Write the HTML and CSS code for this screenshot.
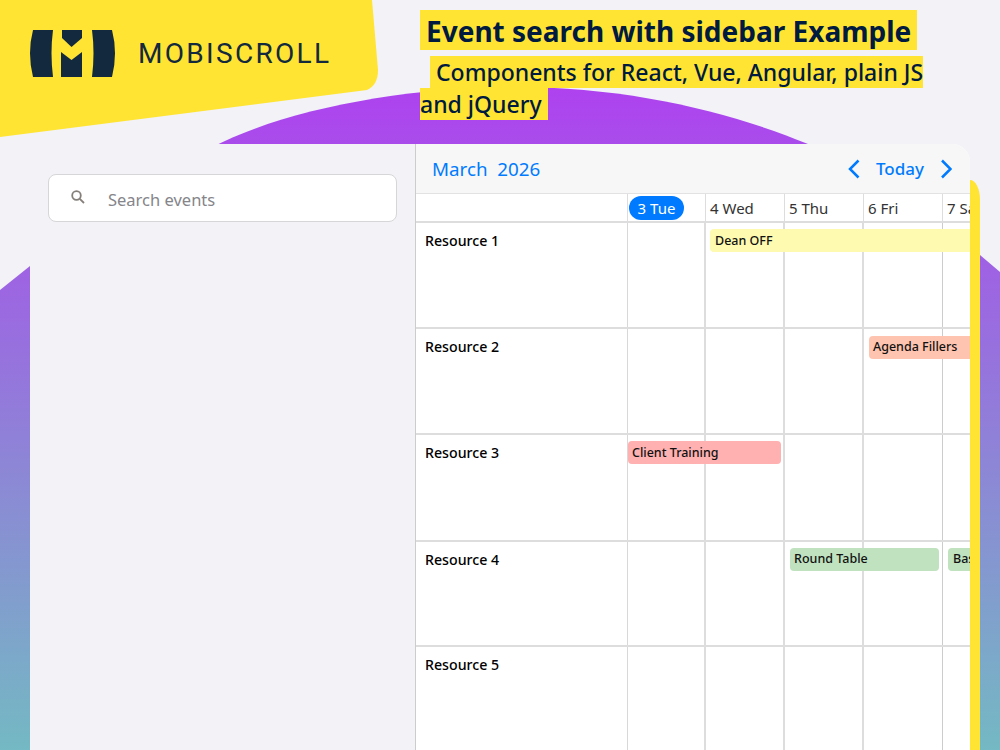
FILE: index.html
```html
<!DOCTYPE html>
<html lang="en">
<head>
<meta charset="utf-8">
<title>Event search with sidebar Example</title>
<link rel="stylesheet" href="styles.css">
</head>
<body>
<svg class="backdrop" width="1000" height="750" viewBox="0 0 1000 750" aria-hidden="true">
  <defs>
    <linearGradient id="wave" x1="0" y1="88" x2="0" y2="750" gradientUnits="userSpaceOnUse">
      <stop offset="0" stop-color="#ae42ef"/>
      <stop offset="1" stop-color="#74b9c3"/>
    </linearGradient>
  </defs>
  <path fill="url(#wave)" d="M0 290 L30 266 L200 154 C270 112 400 87 515 87 C630 87 730 112 808 144 L980 255 L1000 272 V750 H0 Z"/>
  <path fill="#ffe433" d="M0 0 H372 L378 70 Q378 85 367 90 L0 137 Z"/>
</svg>
<div class="page">
  <header class="top">
    <div class="brand">
      <svg class="mark" width="86" height="48" viewBox="30 30 86 48" aria-hidden="true">
        <path d="M33 30 H53 Q50 53 53 77 H33 Q27 53 33 30 Z"/>
        <path d="M92 30 H112 Q118 53 112 77 H92 Q95 53 92 30 Z"/>
        <path d="M62 30 H82 V38 L71.500 47 L62 38 Z"/>
        <path d="M61 52 L71.500 60 L82 52 V77 H61 Z"/>
      </svg>
      <span class="wordmark">MOBISCROLL</span>
    </div>
    <div class="titles">
      <h1 class="title"><span class="mark-bg title-text">Event search with sidebar Example</span></h1>
      <p class="subtitle"><span class="mark-bg subtitle-text">Components for React, Vue, Angular, plain JS and jQuery</span></p>
    </div>
  </header>
  <main class="panel">
    <aside class="sidebar">
      <div class="search">
        <svg class="search-icon" width="16" height="16" viewBox="0 0 16 16" aria-hidden="true">
          <circle cx="6.500" cy="6.500" r="4.300"/>
          <path d="M9.800 9.800 L14 14"/>
        </svg>
        <span class="search-text">Search events</span>
      </div>
    </aside>
    <section class="card">
      <div class="toolbar">
        <span class="month">March&nbsp; 2026</span>
        <div class="nav">
          <svg class="chev" width="12" height="20" viewBox="0 0 12 20" aria-hidden="true"><path d="M10.500 1.500 L2 10 L10.500 18.500"/></svg>
          <span class="today">Today</span>
          <svg class="chev" width="12" height="20" viewBox="0 0 12 20" aria-hidden="true"><path d="M2 1.500 L10.500 10 L2 18.500"/></svg>
        </div>
      </div>
      <div class="days">
        <div class="corner"></div>
        <div class="day"><span class="pill">3 Tue</span></div>
        <div class="day">4 Wed</div>
        <div class="day">5 Thu</div>
        <div class="day">6 Fri</div>
        <div class="day">7 Sat</div>
      </div>
      <div class="row">
        <div class="res">Resource 1</div>
        <div class="cell c1"></div><div class="cell c2"></div><div class="cell c3"></div><div class="cell c4"></div><div class="cell c5"></div>
        <div class="event dean">Dean OFF</div>
      </div>
      <div class="row">
        <div class="res">Resource 2</div>
        <div class="cell c1"></div><div class="cell c2"></div><div class="cell c3"></div><div class="cell c4"></div><div class="cell c5"></div>
        <div class="event agenda">Agenda Fillers</div>
      </div>
      <div class="row row-tall">
        <div class="res">Resource 3</div>
        <div class="cell c1"></div><div class="cell c2"></div><div class="cell c3"></div><div class="cell c4"></div><div class="cell c5"></div>
        <div class="event client">Client Training</div>
      </div>
      <div class="row row-short">
        <div class="res">Resource 4</div>
        <div class="cell c1"></div><div class="cell c2"></div><div class="cell c3"></div><div class="cell c4"></div><div class="cell c5"></div>
        <div class="event round">Round Table</div>
        <div class="event basic">Basic</div>
      </div>
      <div class="row">
        <div class="res">Resource 5</div>
        <div class="cell c1"></div><div class="cell c2"></div><div class="cell c3"></div><div class="cell c4"></div><div class="cell c5"></div>
      </div>
    </section>
    <div class="strip"></div>
  </main>
</div>
</body>
</html>
```
FILE: styles.css
```css
* { box-sizing: border-box; }
html, body { margin: 0; height: 100%; }
body {
  width: 1000px;
  height: 750px;
  overflow: hidden;
  position: relative;
  background: #f2f2f7;
  font-family: "Noto Sans", "Open Sans", sans-serif;
  color: #000;
}
.backdrop { position: absolute; left: 0; top: 0; display: block; }
.page { position: relative; height: 750px; display: flex; flex-direction: column; }

.top { height: 144px; display: flex; flex: none; }
.brand { width: 420px; padding: 30px 0 0 30px; display: flex; align-items: flex-start; gap: 22px; flex: none; }
.mark { display: block; flex: none; }
.mark path { fill: #13293d; }
.wordmark {
  font-family: "Roboto", sans-serif;
  font-size: 28px;
  line-height: 48px;
  letter-spacing: 2.300px;
  color: #13293d;
}
.titles { padding-top: 10px; width: 510px; color: #001a40; }
.title { margin: 1px 0 0; font-size: 28px; line-height: 40px; font-weight: 700; }
.subtitle { margin: 5px 0 0; font-size: 23px; line-height: 32px; font-weight: 500; }
.mark-bg { background: #ffe433; padding: 0 6px; }
.title-text { padding-top: 2px; }
.subtitle-text { margin-left: 10px; }

.panel {
  flex: 1;
  min-height: 0;
  margin: 0 20px 0 30px;
  padding-left: 18px;
  background: #f2f2f7;
  display: flex;
  overflow: hidden;
}
.sidebar { width: 367px; flex: none; padding-top: 30px; }
.search {
  width: 349px;
  height: 48px;
  background: #fff;
  border: 1px solid #d6d6d9;
  border-radius: 8px;
  display: flex;
  align-items: center;
  padding-left: 21px;
  gap: 22px;
}
.search-icon { flex: none; margin-top: -3px; }
.search-icon circle, .search-icon path { fill: none; stroke: #857f7a; stroke-width: 1.800; }
.search-text { font-size: 16.500px; color: #85858a; padding-top: 2px; }

.card {
  width: 555px;
  flex: none;
  background: #fff;
  border-left: 1px solid #ccc;
  border-top-right-radius: 18px;
  overflow: hidden;
}
.strip {
  width: 10px;
  flex: none;
  margin-top: 36px;
  background: #ffe433;
  border-top-right-radius: 10px 20px;
}

.toolbar {
  height: 50px;
  background: #f7f7f7;
  border-bottom: 1px solid #e2e2e2;
  display: flex;
  align-items: center;
  justify-content: space-between;
  padding: 0 18px 0 16px;
}
.month { font-size: 18.800px; color: #007bff; }
.nav { display: flex; align-items: center; gap: 16px; }
.today { font-size: 17px; font-weight: 500; color: #007bff; }
.chev { display: block; }
.chev path { fill: none; stroke: #007bff; stroke-width: 2.500; }

.days, .row {
  display: grid;
  grid-template-columns: 212px 78px 79px 79px 79px 79px;
}
.days { height: 29px; border-bottom: 2px solid #ddd; }
.corner { border-right: 1px solid #ddd; }
.day {
  border-right: 1px solid #ddd;
  font-size: 15px;
  line-height: 28px;
  padding-left: 4px;
  color: #333;
  white-space: nowrap;
  overflow: hidden;
}
.day:has(.pill) { padding-left: 1px; }
.pill {
  display: block;
  width: 55px;
  height: 24px;
  margin-top: 2px;
  border-radius: 12px;
  background: #007bff;
  color: #fff;
  font-size: 15px;
  line-height: 24px;
  text-align: center;
}

.row { height: 106px; border-bottom: 2px solid #ddd; }
.row-tall { height: 107px; }
.row-short { height: 105px; }
.res {
  grid-column: 1;
  grid-row: 1;
  padding: 7px 0 0 9px;
  font-size: 14.200px;
  line-height: 22px;
  font-weight: 500;
  border-right: 1px solid #d8d8d8;
}
.cell { grid-row: 1; border-right: 2px solid #ddd; }
.c1 { grid-column: 2; }
.c2 { grid-column: 3; }
.c3 { grid-column: 4; }
.c4 { grid-column: 5; border-right: 1px solid #ccc; }
.c5 { grid-column: 6; border-right: 0; }

.event {
  grid-row: 1;
  align-self: start;
  height: 23px;
  margin-top: 6px;
  border-radius: 4px;
  font-size: 12.500px;
  line-height: 24px;
  font-weight: 500;
  color: #111;
  padding-left: 5px;
  white-space: nowrap;
  overflow: hidden;
}
.dean { grid-column: 3 / 7; margin-left: 4px; background: #fefab0; border-radius: 4px 0 0 4px; }
.agenda { grid-column: 5 / 7; margin-left: 5px; background: #ffc4b0; padding-left: 4px; margin-top: 7px; line-height: 22px; border-radius: 4px 0 0 4px; }
.client { grid-column: 2 / 4; margin: 6px 4px 0 0; background: #ffb0b0; padding-left: 4px; }
.round { grid-column: 4 / 6; margin: 6px 4px 0 5px; background: #c0e2bf; padding-left: 4px; line-height: 22px; }
.basic { grid-column: 6; margin-left: 5px; background: #c0e2bf; line-height: 22px; border-radius: 4px 0 0 4px; }
```
